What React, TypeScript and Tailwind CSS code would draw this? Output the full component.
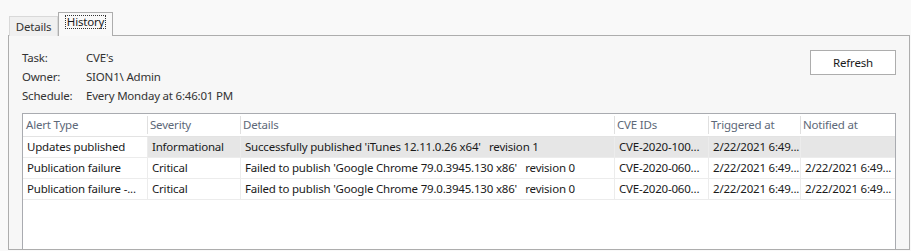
const columns = ['Alert Type', 'Severity', 'Details', 'CVE IDs', 'Triggered at', 'Notified at'];

const rows = [
  {
    selected: true,
    cells: [
      'Updates published',
      'Informational',
      "Successfully published 'iTunes 12.11.0.26 x64'   revision 1",
      'CVE-2020-100...',
      '2/22/2021 6:49...',
      '',
    ],
  },
  {
    selected: false,
    cells: [
      'Publication failure',
      'Critical',
      "Failed to publish 'Google Chrome 79.0.3945.130 x86'   revision 0",
      'CVE-2020-060...',
      '2/22/2021 6:49...',
      '2/22/2021 6:49...',
    ],
  },
  {
    selected: false,
    cells: [
      'Publication failure -...',
      'Critical',
      "Failed to publish 'Google Chrome 79.0.3945.130 x86'   revision 0",
      'CVE-2020-060...',
      '2/22/2021 6:49...',
      '2/22/2021 6:49...',
    ],
  },
];

const info = [
  ['Task:', "CVE's"],
  ['Owner:', 'SION1\\ Admin'],
  ['Schedule:', 'Every Monday at 6:46:01 PM'],
];

const gridCols = 'grid grid-cols-[124px_93px_374px_94px_92px_1fr]';

function AlertTable() {
  return (
    <div className="mt-[8px] flex-1 border border-b-0 border-[#a9abb0] bg-white overflow-hidden">
      {/* header */}
      <div className={`${gridCols} h-[23px] border-b border-[#e3e3e3]`}>
        {columns.map((c, i) => (
          <div key={c} className="relative flex items-center pl-[3px] text-[#5d6878] whitespace-nowrap">
            {i > 0 && <span className="absolute left-0 top-[2px] bottom-[2px] w-px bg-[#e0e0e0]" />}
            {c}
          </div>
        ))}
      </div>

      {rows.map((r, ri) => (
        <div key={ri} className={`${gridCols} h-[21px] border-b border-[#ececec]`}>
          {r.cells.map((c, ci) => (
            <div
              key={ci}
              className={`flex items-center pl-[4px] whitespace-pre overflow-hidden text-[#1a1a1a] ${
                ci > 0 ? 'border-l border-[#ececec]' : ''
              } ${r.selected && ci > 0 ? 'bg-[#e6e6e6]' : ''}`}
            >
              {c}
            </div>
          ))}
        </div>
      ))}
    </div>
  );
}

export default function App() {
  return (
    <div
      className="w-[911px] h-[251px] bg-[#f9f9f9] text-[11.5px] tracking-[-0.2px] leading-none overflow-hidden"
      style={{ fontFamily: '"Noto Sans", "Open Sans", sans-serif' }}
    >
      {/* tabs */}
      <div className="flex items-end pl-[9px] pt-[12px] h-[36px] relative z-10">
        <div className="h-[20px] w-[49px] border border-b-0 border-[#d9d9d9] bg-[#f0f0f0] flex items-center justify-center text-[#333]">
          Details
        </div>
        <div className="h-[24px] w-[55px] border border-b-0 border-[#adadad] bg-[#f9f9f9] flex items-start justify-center pt-[3px]">
          <span className="outline outline-1 outline-dotted outline-[#333] px-[1px] text-[#1a1a1a]">History</span>
        </div>
      </div>

      {/* panel */}
      <div className="ml-[8px] -mt-px w-[902px] h-[215px] border border-[#adadad] bg-[#f7f7f7] flex flex-col px-[13px] pt-[12px]">
        <div className="flex justify-between">
          <div className="flex flex-col">
            {info.map(([k, v]) => (
              <div key={k} className="flex h-[19px] items-center text-[#333]">
                <span className="w-[64px]">{k}</span>
                <span>{v}</span>
              </div>
            ))}
          </div>
          <button className="mt-[2px] h-[25px] w-[86px] border border-[#adadad] bg-white text-[#1a1a1a]">
            Refresh
          </button>
        </div>
        <AlertTable />
      </div>
    </div>
  );
}
